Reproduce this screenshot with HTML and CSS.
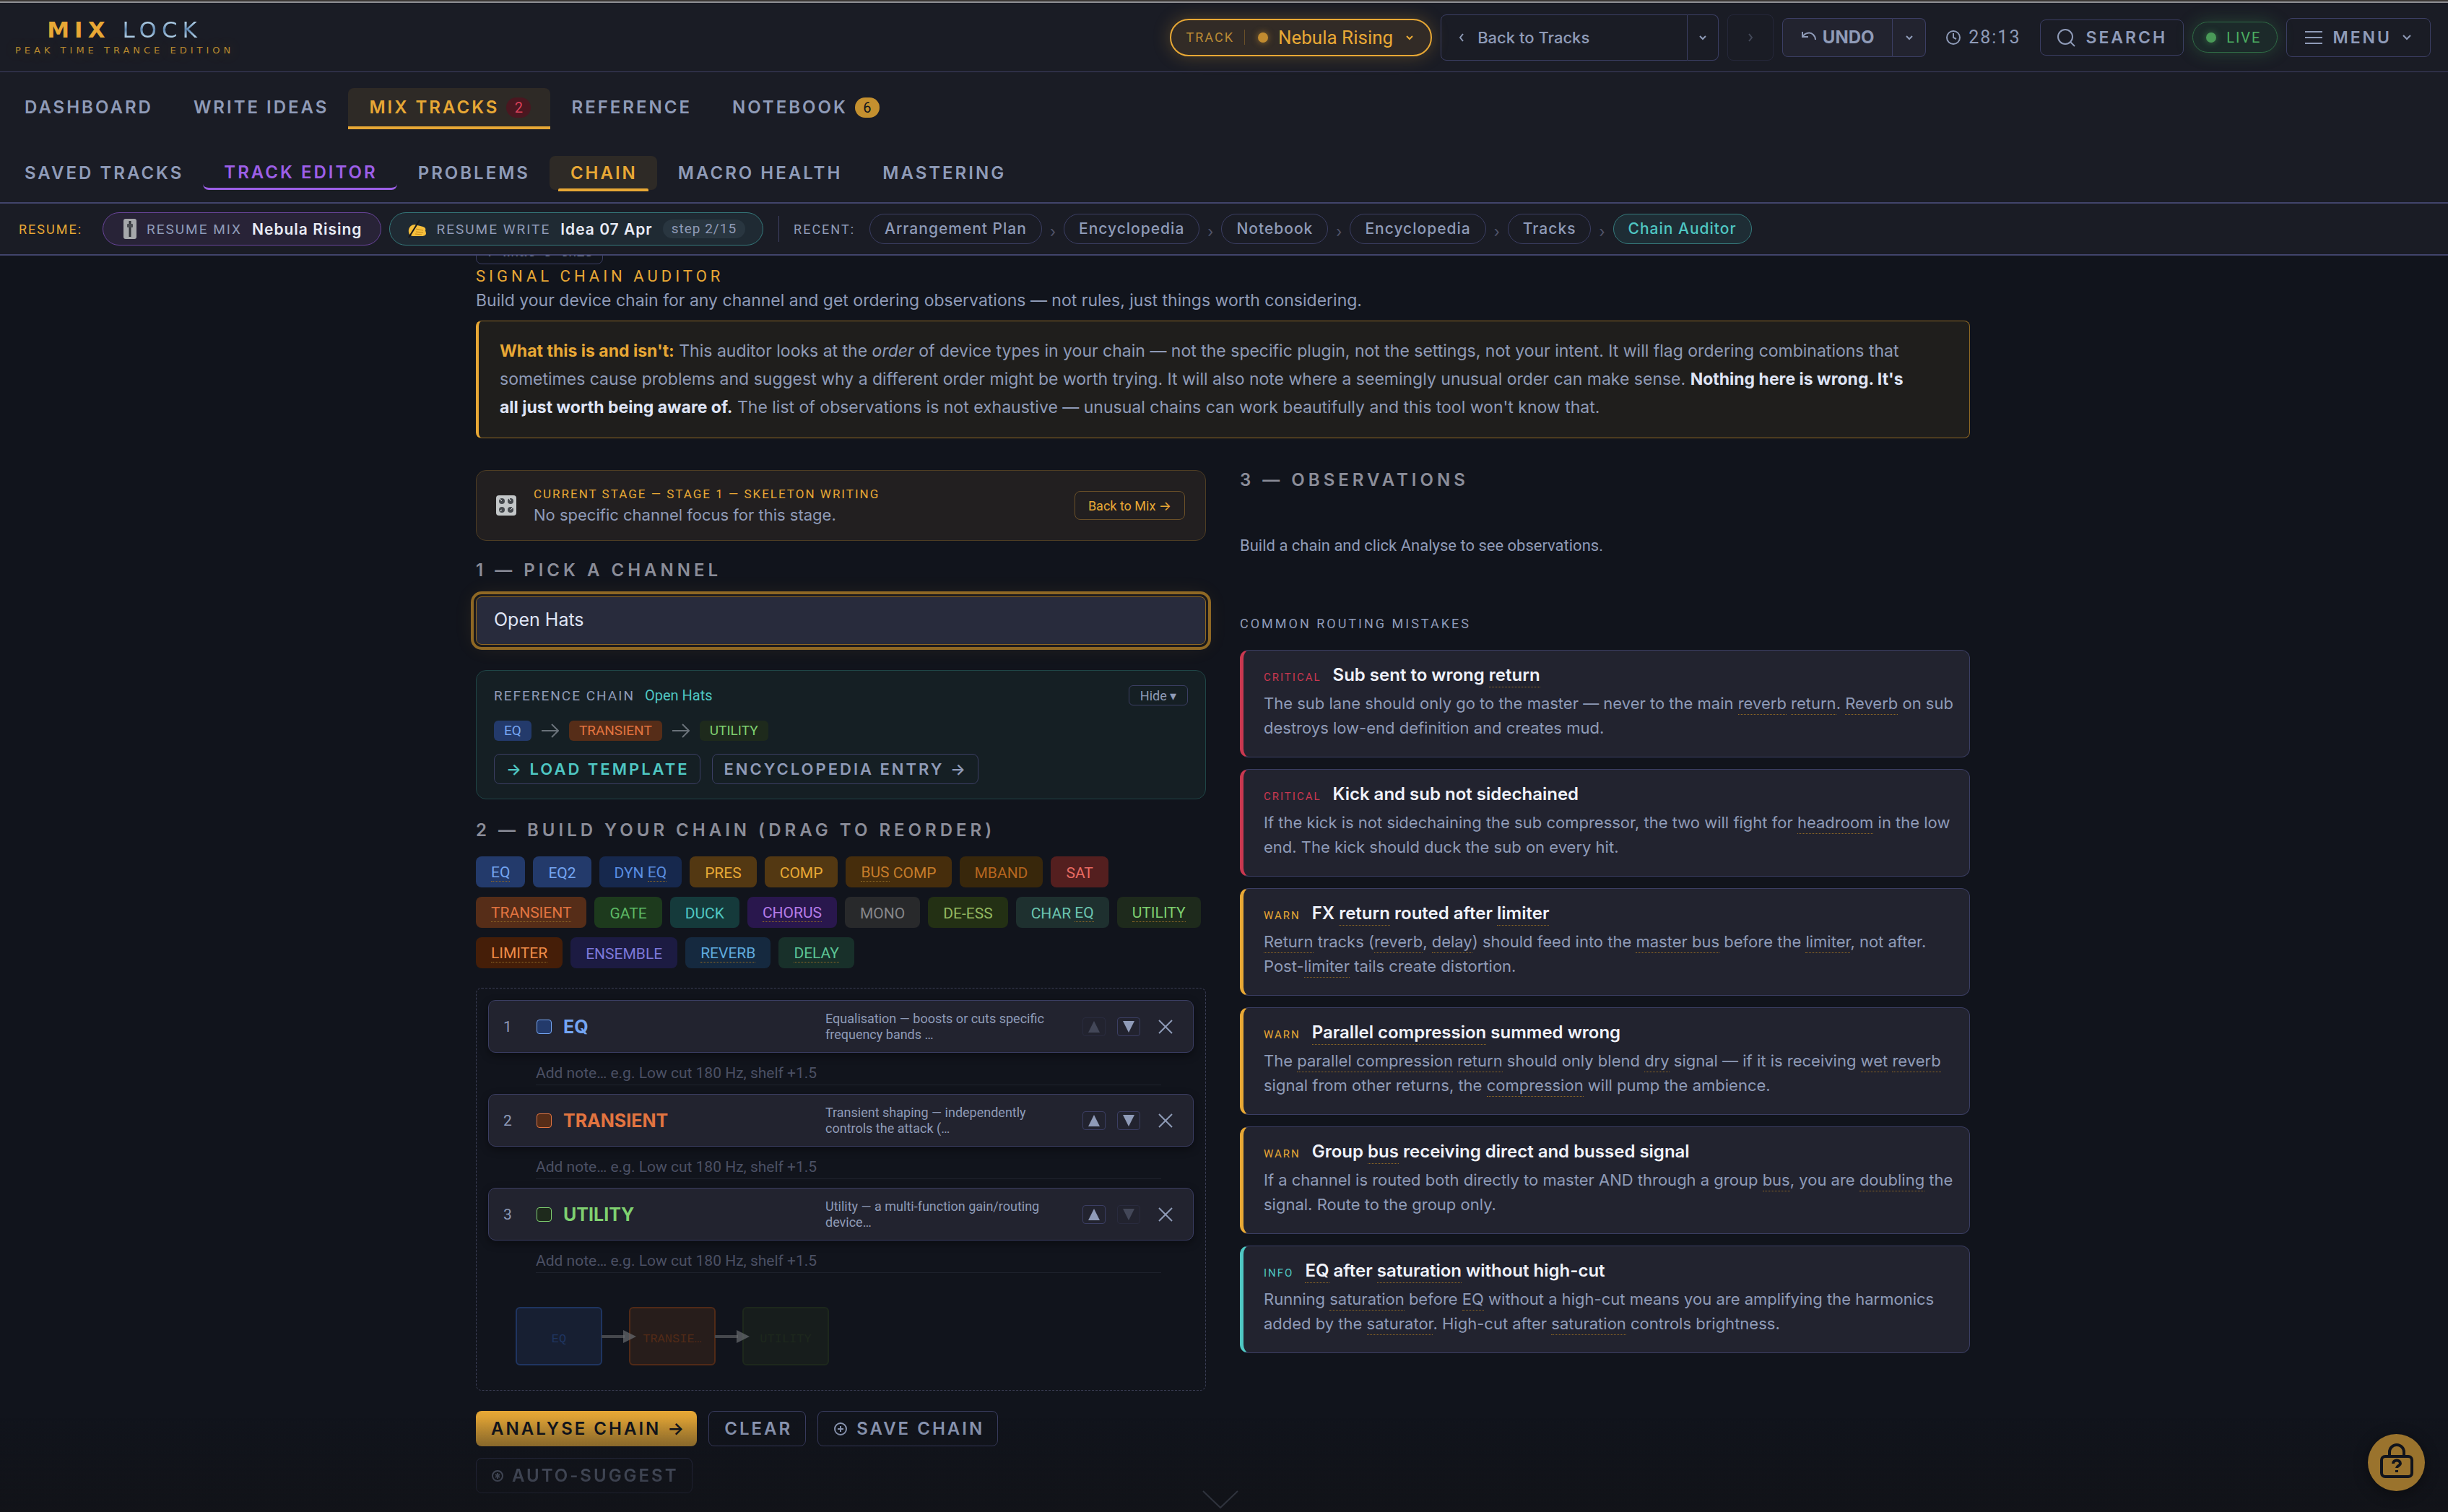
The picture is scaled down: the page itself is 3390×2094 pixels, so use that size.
FILE: index.html
```html
<!DOCTYPE html>
<html lang="en">
<head>
    <meta charset="UTF-8">
    <title>Mix Lock - Chain Auditor</title>
    <link rel="stylesheet" href="styles.css">
</head>
<body>
    <header class="header">
        <div class="topbar">
            <a class="logo" href="#">
                <span class="logo-name"><span class="logo-mix">MIX</span> <span class="logo-lock">LOCK</span></span>
                <span class="logo-sub">PEAK TIME TRANCE EDITION</span>
            </a>
            <div class="tools">
                <button class="track-pill"><span class="track-label">TRACK</span><span class="dot"></span><span class="track-name">Nebula Rising</span>
                    <svg width="10" height="8" viewBox="0 0 10 8"><path d="M1 2l4 4 4-4"/></svg></button>
                <div class="split back">
                    <button class="split-main"><svg width="8" height="12" viewBox="0 0 8 12"><path d="M6 1L2 6l4 5"/></svg>Back to Tracks</button>
                    <button class="split-drop" aria-label="History"><svg width="10" height="8" viewBox="0 0 10 8"><path d="M1 2l4 4 4-4"/></svg></button>
                </div>
                <button class="forward" disabled aria-label="Forward"><svg width="8" height="12" viewBox="0 0 8 12"><path d="M2 1l4 5-4 5"/></svg></button>
                <div class="split undo">
                    <button class="split-main"><svg width="22" height="18" viewBox="0 0 22 18"><path d="M2 1v7h8M2 8C6 2 13 1 17 5c2 2 3 4 3 7"/></svg>UNDO</button>
                    <button class="split-drop" aria-label="Undo history"><svg width="10" height="8" viewBox="0 0 10 8"><path d="M1 2l4 4 4-4"/></svg></button>
                </div>
                <div class="clock"><svg width="22" height="22" viewBox="0 0 22 22"><circle cx="11" cy="11" r="9"/><path d="M11 5v6l4 2"/></svg>28:13</div>
                <button class="tool search"><svg width="26" height="26" viewBox="0 0 26 26"><circle cx="12" cy="12" r="10"/><path d="M19 19l6 6"/></svg>SEARCH</button>
                <div class="live"><span class="live-dot"></span>LIVE</div>
                <button class="tool menu"><svg width="24" height="20" viewBox="0 0 24 20"><path d="M0 2h24M0 10h24M0 18h24"/></svg>MENU
                    <svg width="14" height="10" viewBox="0 0 14 10"><path d="M2 2l5 5 5-5"/></svg></button>
            </div>
        </div>
        <nav class="nav nav-main">
            <a href="#">DASHBOARD</a>
            <a href="#">WRITE IDEAS</a>
            <a href="#" class="active">MIX TRACKS<span class="count red">2</span></a>
            <a href="#">REFERENCE</a>
            <a href="#">NOTEBOOK<span class="count gold">6</span></a>
        </nav>
        <nav class="nav nav-sub">
            <a href="#">SAVED TRACKS</a>
            <a href="#" class="editor">TRACK EDITOR</a>
            <a href="#">PROBLEMS</a>
            <a href="#" class="active">CHAIN</a>
            <a href="#">MACRO HEALTH</a>
            <a href="#">MASTERING</a>
        </nav>
        <div class="resume">
            <span class="resume-title">RESUME:</span>
            <button class="pill pill-mix">
                <svg width="18" height="28" viewBox="0 0 18 28"><rect width="18" height="28" rx="3" fill="#a6a8ab"/><path d="M9 3v22" stroke="#303238" stroke-width="3"/><rect x="5" y="7" width="8" height="5" rx="1" fill="#4a4c52"/></svg>
                <span class="pill-label">RESUME MIX</span><b>Nebula Rising</b>
            </button>
            <button class="pill pill-write">
                <svg width="26" height="26" viewBox="0 0 26 26"><path d="M2 14c1-4 4-7 8-7l4 1 8 2c3 1 4 3 3 5l1 4c0 3-3 4-6 4H8c-4 0-7-4-6-9z" fill="#f6bf3b"/><path d="M12 13l10 2M12 17l10 1M11 20l9 1" stroke="#c58a1d" stroke-width="1"/><path d="M2 25L17 1" stroke="#17181c" stroke-width="2"/></svg>
                <span class="pill-label">RESUME WRITE</span><b>Idea 07 Apr</b><span class="step">step 2/15</span>
            </button>
            <span class="divider"></span>
            <span class="recent-title">RECENT:</span>
            <div class="crumbs">
                <a href="#">Arrangement Plan</a><i>›</i>
                <a href="#">Encyclopedia</a><i>›</i>
                <a href="#">Notebook</a><i>›</i>
                <a href="#">Encyclopedia</a><i>›</i>
                <a href="#">Tracks</a><i>›</i>
                <a href="#" class="current">Chain Auditor</a>
            </div>
        </div>
    </header>

    <main class="page">
        <button class="whats-this">? What's this</button>
        <h1>SIGNAL CHAIN AUDITOR</h1>
        <p class="intro">Build your device chain for any channel and get ordering observations — not rules, just things worth considering.</p>
        <div class="callout">
            <strong class="gold-text">What this is and isn't:</strong> This auditor looks at the <em>order</em> of device types in your chain — not the specific plugin, not the settings, not your intent. It will flag ordering combinations that sometimes cause problems and suggest why a different order might be worth trying. It will also note where a seemingly unusual order can make sense. <strong>Nothing here is wrong. It's all just worth being aware of.</strong> The list of observations is not exhaustive — unusual chains can work beautifully and this tool won't know that.
        </div>

        <div class="columns">
            <section class="left">
                <div class="stage">
                    <svg width="28" height="28" viewBox="0 0 28 28"><rect width="28" height="28" rx="4" fill="#c3c6c8"/><g fill="#45484d"><circle cx="8" cy="8" r="4"/><circle cx="20" cy="8" r="4"/><circle cx="8" cy="20" r="4"/><circle cx="20" cy="20" r="4"/></g><path d="M8 8L5 5M20 8l-2-4M8 20l-3 2M20 20l3-3" stroke="#e8eaec" stroke-width="1"/></svg>
                    <div class="stage-text">
                        <div class="stage-name">CURRENT STAGE — STAGE 1 — SKELETON WRITING</div>
                        <div class="stage-note">No specific channel focus for this stage.</div>
                    </div>
                    <button class="back-to-mix">Back to Mix →</button>
                </div>

                <h2><label for="channel">1 — PICK A CHANNEL</label></h2>
                <select id="channel" class="channel">
                    <option>Open Hats</option>
                </select>

                <div class="refchain">
                    <div class="refchain-head">
                        <span class="ref-label">REFERENCE CHAIN</span><span class="ref-name">Open Hats</span>
                        <button class="hide">Hide ▾</button>
                    </div>
                    <div class="refchain-flow">
                        <span class="eq">EQ</span><svg width="24" height="20" viewBox="0 0 24 20"><path d="M0 10h23M14 1l9 9-9 9"/></svg>
                        <span class="transient">TRANSIENT</span><svg width="24" height="20" viewBox="0 0 24 20"><path d="M0 10h23M14 1l9 9-9 9"/></svg>
                        <span class="utility">UTILITY</span>
                    </div>
                    <div class="refchain-actions">
                        <button class="btn teal">→ LOAD TEMPLATE</button>
                        <button class="btn">ENCYCLOPEDIA ENTRY →</button>
                    </div>
                </div>

                <h2>2 — BUILD YOUR CHAIN (DRAG TO REORDER)</h2>
                <div class="palette">
                    <button class="eq"><u>EQ</u></button>
                    <button class="eq">EQ2</button>
                    <button class="dyneq">DYN <u>EQ</u></button>
                    <button class="comp">PRES</button>
                    <button class="comp">COMP</button>
                    <button class="buscomp"><u>BUS</u> COMP</button>
                    <button class="mband">MBAND</button>
                    <button class="sat">SAT</button>
                    <button class="transient"><u>TRANSIENT</u></button>
                    <button class="gate">GATE</button>
                    <button class="duck">DUCK</button>
                    <button class="chorus"><u>CHORUS</u></button>
                    <button class="mono">MONO</button>
                    <button class="deess">DE-ESS</button>
                    <button class="chareq">CHAR <u>EQ</u></button>
                    <button class="utility"><u>UTILITY</u></button>
                    <button class="limiter"><u>LIMITER</u></button>
                    <button class="ensemble">ENSEMBLE</button>
                    <button class="reverb"><u>REVERB</u></button>
                    <button class="delay"><u>DELAY</u></button>
                </div>

                <div class="chain">
                    <div class="device">
                        <span class="num">1</span><span class="swatch eq"></span><span class="name eq">EQ</span>
                        <span class="desc">Equalisation — boosts or cuts specific frequency bands …</span>
                        <button class="move" disabled aria-label="Move up"><svg width="16" height="16" viewBox="0 0 16 16"><path d="M8 0l8 16H0z"/></svg></button>
                        <button class="move" aria-label="Move down"><svg width="16" height="16" viewBox="0 0 16 16"><path d="M8 16l8-16H0z"/></svg></button>
                        <button class="remove" aria-label="Remove"><svg width="20" height="20" viewBox="0 0 20 20"><path d="M1 1l18 18M19 1L1 19"/></svg></button>
                    </div>
                    <input class="note" type="text" aria-label="Note for EQ" placeholder="Add note… e.g. Low cut 180 Hz, shelf +1.5">
                    <div class="device">
                        <span class="num">2</span><span class="swatch transient"></span><span class="name transient">TRANSIENT</span>
                        <span class="desc">Transient shaping — independently controls the attack (…</span>
                        <button class="move" aria-label="Move up"><svg width="16" height="16" viewBox="0 0 16 16"><path d="M8 0l8 16H0z"/></svg></button>
                        <button class="move" aria-label="Move down"><svg width="16" height="16" viewBox="0 0 16 16"><path d="M8 16l8-16H0z"/></svg></button>
                        <button class="remove" aria-label="Remove"><svg width="20" height="20" viewBox="0 0 20 20"><path d="M1 1l18 18M19 1L1 19"/></svg></button>
                    </div>
                    <input class="note" type="text" aria-label="Note for Transient" placeholder="Add note… e.g. Low cut 180 Hz, shelf +1.5">
                    <div class="device">
                        <span class="num">3</span><span class="swatch utility"></span><span class="name utility">UTILITY</span>
                        <span class="desc">Utility — a multi-function gain/routing device…</span>
                        <button class="move" aria-label="Move up"><svg width="16" height="16" viewBox="0 0 16 16"><path d="M8 0l8 16H0z"/></svg></button>
                        <button class="move" disabled aria-label="Move down"><svg width="16" height="16" viewBox="0 0 16 16"><path d="M8 16l8-16H0z"/></svg></button>
                        <button class="remove" aria-label="Remove"><svg width="20" height="20" viewBox="0 0 20 20"><path d="M1 1l18 18M19 1L1 19"/></svg></button>
                    </div>
                    <input class="note" type="text" aria-label="Note for Utility" placeholder="Add note… e.g. Low cut 180 Hz, shelf +1.5">
                    <svg class="flow" width="440" height="84" viewBox="0 0 440 84">
                        <rect x="2" y="2" width="118" height="79" rx="5" fill="#171f32" stroke="#1f3561"/>
                        <rect x="159" y="2" width="118" height="79" rx="5" fill="#271d1b" stroke="#512a17"/>
                        <rect x="316" y="2" width="118" height="79" rx="5" fill="#171d1c" stroke="#1d281c"/>
                        <path d="M120 42h32M277 42h32" stroke="#45474c" stroke-width="4"/>
                        <path d="M150 33l18 9-18 9zM307 33l18 9-18 9z" fill="#6a6c70" opacity=".7"/>
                        <g class="flow-text">
                            <text x="61" y="50" fill="#1f3561">EQ</text>
                            <text x="218" y="50" fill="#512a17">TRANSIE…</text>
                            <text x="375" y="50" fill="#1d281c">UTILITY</text>
                        </g>
                    </svg>
                </div>

                <div class="actions">
                    <button class="btn primary">ANALYSE CHAIN →</button>
                    <button class="btn">CLEAR</button>
                    <button class="btn"><svg width="20" height="20" viewBox="0 0 20 20"><circle cx="10" cy="10" r="8"/><path d="M10 6v8M6 10h8"/></svg>SAVE CHAIN</button>
                    <button class="btn" disabled><svg width="16" height="16" viewBox="0 0 16 16"><circle cx="8" cy="8" r="7"/><path d="M8 4v8M5 6l6 4M11 6l-6 4"/></svg>AUTO-SUGGEST</button>
                </div>
            </section>

            <section class="right">
                <h2>3 — OBSERVATIONS</h2>
                <p class="empty">Build a chain and click Analyse to see observations.</p>
                <h3>COMMON ROUTING MISTAKES</h3>
                <article class="mistake critical">
                    <h4><span class="level">CRITICAL</span>Sub sent to wrong <u>return</u></h4>
                    <p>The sub lane should only go to the master — never to the main <u>reverb</u> <u>return</u>. <u>Reverb</u> on sub destroys low-end definition and creates mud.</p>
                </article>
                <article class="mistake critical">
                    <h4><span class="level">CRITICAL</span>Kick and sub not sidechained</h4>
                    <p>If the kick is not sidechaining the sub compressor, the two will fight for <u>headroom</u> in the low end. The kick should duck the sub on every hit.</p>
                </article>
                <article class="mistake warn">
                    <h4><span class="level">WARN</span>FX <u>return</u> routed after <u>limiter</u></h4>
                    <p><u>Return</u> tracks (<u>reverb</u>, <u>delay</u>) should feed into the <u>master bus</u> before the <u>limiter</u>, not after. Post-<u>limiter</u> tails create distortion.</p>
                </article>
                <article class="mistake warn">
                    <h4><span class="level">WARN</span><u>Parallel compression</u> summed wrong</h4>
                    <p>The <u>parallel compression</u> <u>return</u> should only blend <u>dry</u> signal — if it is receiving <u>wet</u> <u>reverb</u> signal from other returns, the <u>compression</u> will pump the ambience.</p>
                </article>
                <article class="mistake warn">
                    <h4><span class="level">WARN</span>Group <u>bus</u> receiving direct and bussed signal</h4>
                    <p>If a channel is routed both directly to master AND through a group <u>bus</u>, you are <u>doubling</u> the signal. Route to the group only.</p>
                </article>
                <article class="mistake info">
                    <h4><span class="level">INFO</span><u>EQ</u> after <u>saturation</u> without high-cut</h4>
                    <p>Running <u>saturation</u> before <u>EQ</u> without a high-cut means you are amplifying the harmonics added by the <u>saturator</u>. High-cut after <u>saturation</u> controls brightness.</p>
                </article>
            </section>
        </div>
    </main>

    <div class="fade"><svg width="50" height="26" viewBox="0 0 50 26"><path d="M1 1l24 23L49 1"/></svg></div>
    <button class="help" aria-label="Help">
        <svg width="46" height="50" viewBox="0 0 46 50"><rect x="2" y="19" width="42" height="28" rx="5"/><path d="M13 19v-6a10 10 0 0 1 20 0v6"/><path d="M18 29c0-6 10-6 10 0 0 3-5 3-5 6M23 38v3"/></svg>
    </button>
</body>
</html>
```
FILE: styles.css
```css
* {
    box-sizing: border-box;
}
body {
    margin: 0;
    background-color: #11141c;
    color: #8f9bb8;
    font-family: Inter, "Liberation Sans", sans-serif;
    font-size: 22px;
}
button, input, select {
    font: inherit;
    color: inherit;
    margin: 0;
    padding: 0;
    background: none;
    border: 1px solid #3b3e63;
    border-radius: 8px;
}
button {
    display: flex;
    align-items: center;
    justify-content: center;
    white-space: nowrap;
    cursor: pointer;
}
a {
    color: inherit;
    text-decoration: none;
}
h1, h2, h3, h4, p {
    margin: 0;
}
svg {
    fill: none;
    stroke: currentColor;
    stroke-width: 2;
    flex: none;
}
svg [fill]:not([stroke]) {
    stroke: none;
}

/* header */
.header {
    position: relative;
    z-index: 2;
    background-color: #1a1c25;
    border-top: 2px solid #3c3835;
    box-shadow: inset 0 2px #8f8f94;
}
.topbar {
    display: flex;
    justify-content: space-between;
    align-items: center;
    height: 98px;
    padding: 2px 24px 0 21px;
    border-bottom: 1px solid #3f4063;
}
.logo {
    display: flex;
    flex-direction: column;
    align-items: center;
    gap: 6px;
    padding-bottom: 2px;
    font-family: "DejaVu Sans", sans-serif;
}
.logo-name {
    font-size: 31px;
    line-height: 32px;
    letter-spacing: 7px;
}
.logo-mix {
    font-weight: bold;
    color: #e8a835;
}
.logo-lock {
    background: linear-gradient(#b5d3ea 20%, #5f87b0 50%, #b5d3ea 80%);
    -webkit-background-clip: text;
    background-clip: text;
    color: transparent;
}
.logo-sub {
    font-size: 13px;
    line-height: 14px;
    letter-spacing: 5px;
    color: #b98a30;
    text-shadow: 0 0 20px #e8a83555;
}
.tools {
    display: flex;
    align-items: center;
    gap: 12px;
}
.track-pill {
    height: 52px;
    padding: 0 24px 0 20px;
    font-family: Roboto, sans-serif;
    color: #e8a835;
    background-color: #322b26;
    border: 2px solid #e8a835;
    border-radius: 26px;
    box-shadow: 0 0 24px #e8a83544;
}
.track-label {
    font-size: 18px;
    letter-spacing: 2px;
    padding-right: 14px;
    border-right: 1px solid #6b5028;
    color: #b98a35;
}
.dot, .live-dot {
    width: 14px;
    height: 14px;
    border-radius: 50%;
    background-color: #c18b30;
    box-shadow: 0 0 10px #e8a83588;
    margin: 0 14px 0 18px;
}
.track-name {
    font-size: 26px;
    margin-right: 18px;
}
.split {
    display: flex;
}
.split-main {
    border-radius: 8px 0 0 8px;
}
.split-drop {
    width: 43px;
    border-left: none;
    border-radius: 0 8px 8px 0;
}
.back {
    height: 64px;
    font-weight: 500;
    letter-spacing: 1px;
}
.back .split-main {
    width: 342px;
    justify-content: flex-start;
    padding-left: 24px;
    gap: 18px;
}
.forward {
    width: 64px;
    height: 64px;
    opacity: .35;
}
.undo {
    height: 54px;
    background-color: #22232f;
    border-radius: 8px;
    font-size: 24px;
    font-weight: 700;
    letter-spacing: 2px;
}
.undo .split-main {
    width: 153px;
    gap: 8px;
}
.undo .split-drop {
    width: 46px;
}
.clock {
    display: flex;
    align-items: center;
    gap: 10px;
    padding: 0 15px;
    font-family: Roboto, sans-serif;
    font-size: 25px;
    letter-spacing: 2px;
}
.tool {
    font-size: 23px;
    font-weight: 600;
    letter-spacing: 3px;
    gap: 14px;
    padding: 0 22px;
}
.search {
    height: 50px;
}
.menu {
    height: 54px;
    padding: 0 25px;
}
.live {
    display: flex;
    align-items: center;
    height: 43px;
    padding: 0 22px 0 0;
    font-family: Roboto, sans-serif;
    font-size: 20px;
    letter-spacing: 2px;
    color: #4caf62;
    background-color: #1c2a2a;
    border: 1px solid #2f6b45;
    border-radius: 22px;
    box-shadow: 0 0 24px #4caf6244;
}
.live-dot {
    background-color: #4a9a58;
    box-shadow: 0 0 10px #4caf6288;
}
.nav {
    display: flex;
    padding-left: 5px;
    font-size: 24px;
    font-weight: 600;
    letter-spacing: 3px;
}
.nav-main {
    padding-top: 22px;
}
.nav a {
    display: flex;
    align-items: center;
    padding: 0 27px 0 29px;
    border-radius: 8px 8px 0 0;
}
.nav-main a {
    height: 57px;
    border-bottom: 4px solid transparent;
}
.nav .active {
    color: #e8a835;
    background-color: #2e2a26;
}
.nav-main .active {
    border-bottom-color: #e8a835;
}
.count {
    width: 34px;
    height: 28px;
    margin-left: 10px;
    border-radius: 14px;
    font: 20px/28px Roboto, sans-serif;
    letter-spacing: 0;
    text-align: center;
}
.count.red {
    background-color: #4a1720;
    color: #d9405a;
}
.count.gold {
    background-color: #c4902f;
    color: #11141c;
}
.nav-sub {
    padding-top: 37px;
    padding-bottom: 17px;
    border-bottom: 2px solid #41446b;
}
.nav-sub a {
    position: relative;
    height: 47px;
}
.nav-sub .active {
    border-radius: 8px;
}
.nav-sub .active::after {
    content: "";
    position: absolute;
    left: 12px;
    right: 12px;
    bottom: -2px;
    height: 4px;
    background-color: #e8a835;
    border-radius: 2px 2px 0 0;
}
.nav-sub .editor {
    color: #9d5fe8;
    border-bottom: 3px solid #9d5fe8;
    border-radius: 0 0 8px 8px;
}
.resume {
    display: flex;
    align-items: center;
    height: 72px;
    padding-left: 26px;
    border-bottom: 2px solid #41446b;
}
.resume-title, .recent-title {
    font-family: Roboto, sans-serif;
    font-size: 18px;
    letter-spacing: 2px;
}
.resume-title {
    color: #e8a835;
    margin-right: 28px;
}
.pill {
    height: 46px;
    margin-right: 11px;
    padding: 0 26px 0 28px;
    gap: 14px;
    border-radius: 23px;
}
.pill b {
    font-size: 21px;
    font-weight: 600;
    letter-spacing: 1px;
    color: #e8ebf5;
}
.pill-mix {
    background-color: #282337;
    border-color: #6a459c;
}
.pill-write {
    padding: 0 24px;
    background-color: #1f2a33;
    border-color: #357a7c;
}
.pill-label {
    font-family: Roboto, sans-serif;
    font-size: 19px;
    letter-spacing: 2px;
}
.step {
    padding: 0 12px;
    border-radius: 13px;
    background-color: #293640;
    font: 19px/26px Roboto, sans-serif;
    letter-spacing: 1px;
}
.divider {
    width: 1px;
    height: 36px;
    margin: 0 20px 0 10px;
    background-color: #3f4063;
}
.recent-title {
    margin-right: 20px;
}
.crumbs {
    display: flex;
    align-items: center;
    gap: 11px;
    font-size: 21px;
    font-weight: 500;
    letter-spacing: 1px;
}
.crumbs a {
    padding: 0 20px;
    line-height: 40px;
    border: 1px solid #3b3e63;
    border-radius: 21px;
}
.crumbs i {
    font-style: normal;
    font-weight: 400;
    letter-spacing: 0;
    color: #51546a;
    padding-top: 8px;
    line-height: 20px;
}
.crumbs .current {
    color: #4fc7c3;
    background-color: #1e2d35;
    border-color: #357a7c;
}

/* page */
.page {
    max-width: 2072px;
    margin: 0 auto;
    padding-right: 3px;
}
.whats-this {
    height: 40px;
    width: 176px;
    margin-top: -28px;
    padding-top: 8px;
    font-family: "Liberation Mono", monospace;
    font-size: 19px;
}
h1 {
    margin-top: 4px;
    font: 400 22px/26px Roboto, sans-serif;
    letter-spacing: 5px;
    color: #e8a835;
}
.intro {
    font-size: 23px;
    line-height: 40px;
}
.callout {
    margin-top: 8px;
    padding: 22px 75px 22px 29px;
    font-size: 23px;
    line-height: 39px;
    background-color: #1f1e1c;
    border: 1px solid #8f6824;
    border-left: 4px solid #e8a835;
    border-radius: 8px;
}
.callout strong {
    font-weight: 700;
    color: #dfe4f5;
}
.callout .gold-text {
    color: #e8a835;
}
.columns {
    display: grid;
    grid-template-columns: 1fr 1fr;
    gap: 47px;
    margin-top: 44px;
    align-items: start;
}
h2 {
    font-size: 24px;
    line-height: 28px;
    font-weight: 600;
    letter-spacing: 5px;
    color: #8b8d99;
}
.stage {
    display: flex;
    align-items: center;
    height: 98px;
    padding: 0 28px 0 27px;
    background-color: #221f20;
    border: 1px solid #4e3d23;
    border-radius: 14px;
}
.stage-text {
    flex: 1;
    margin-left: 24px;
}
.stage-name {
    font: 17px/26px Roboto, sans-serif;
    letter-spacing: 2px;
    color: #e8a835;
}
.stage-note {
    font-size: 22px;
    line-height: 32px;
}
.back-to-mix {
    height: 40px;
    padding: 0 18px;
    font-family: Roboto, Inter, sans-serif;
    font-size: 18px;
    color: #e8a835;
    border-color: #6b5028;
}
.left h2 {
    margin: 27px 0 22px;
}
.channel {
    appearance: none;
    display: block;
    width: 100%;
    height: 67px;
    padding: 0 24px 3px;
    font-size: 25px;
    color: #dfe4f5;
    background-color: #282b3c;
    border: 1px solid #8f6824;
    outline: 4px solid #8f6824;
    outline-offset: 3px;
    box-shadow: 0 0 30px #e8a83522;
}
.refchain {
    height: 179px;
    margin: 35px 0 29px;
    padding: 20px 24px;
    background-color: #151f24;
    border: 1px solid #1f4546;
    border-radius: 14px;
}
.refchain-head, .refchain-flow, .refchain-actions {
    display: flex;
    align-items: center;
    font-family: Roboto, sans-serif;
}
.ref-label {
    font-size: 19px;
    letter-spacing: 2px;
}
.ref-name {
    margin-left: 14px;
    color: #4fc7c3;
    font-size: 20px;
}
.hide {
    height: 28px;
    width: 82px;
    margin-left: auto;
    font-size: 18px;
    border-radius: 6px;
}
.refchain-flow {
    gap: 14px;
    margin: 21px 0 18px;
    color: #6a727a;
}
.refchain-flow span {
    padding: 0 14px;
    font-size: 19px;
    line-height: 28px;
    border-radius: 6px;
}
.refchain-actions, .actions {
    display: flex;
    flex-wrap: wrap;
    gap: 16px;
}
.btn {
    height: 42px;
    padding: 0 14px 0 16px;
    font: 600 22px Inter, sans-serif;
    letter-spacing: 3px;
    color: #8f9bb8;
}
.btn.teal {
    color: #4fc7c3;
}
.palette {
    display: flex;
    flex-wrap: wrap;
    gap: 13px 11px;
}
.palette button {
    height: 43px;
    padding: 2px 21px 0;
    border: none;
    font-family: Roboto, sans-serif;
    font-size: 21px;
    white-space: pre;
}
u {
    text-decoration: none;
    border-bottom: 1px dotted #8f6824;
    padding-bottom: 2px;
}
.palette u {
    padding-bottom: 0;
}
.eq { color: #74a5f2; background-color: #233a6b; }
.dyneq { color: #5a8de0; background-color: #16284d; }
.comp { color: #e8a835; background-color: #533812; }
.buscomp { color: #c67c2a; background-color: #462d0c; }
.mband { color: #b5651f; background-color: #38270b; }
.sat { color: #e86a62; background-color: #541f1f; }
.transient { color: #e27440; background-color: #562d18; }
.gate { color: #5cb865; background-color: #1d3a1d; }
.duck { color: #4fc7c3; background-color: #153a3b; }
.chorus { color: #b57be8; background-color: #29174d; }
.mono { color: #85868a; background-color: #28292b; }
.deess { color: #93b860; background-color: #233014; }
.chareq { color: #6cc5b0; background-color: #1e302f; }
.utility { color: #7fd070; background-color: #1e2a1c; }
.limiter { color: #f08c48; background-color: #451e08; }
.ensemble { color: #7d78d8; background-color: #1c1b42; }
.reverb { color: #5faade; background-color: #15293f; }
.delay { color: #5cc596; background-color: #18302a; }

/* device chain */
.chain {
    margin-top: 27px;
    padding: 16px;
    border: 1px dashed #3b3e55;
    border-radius: 8px;
}
.device {
    display: flex;
    align-items: center;
    height: 73px;
    padding: 0 28px 0 20px;
    background-color: #22232f;
    border: 1px solid #3b3e63;
    border-radius: 10px;
    box-shadow: 0 4px 12px #00000066;
    font-family: Roboto, sans-serif;
}
.num {
    width: 46px;
    font-size: 21px;
}
.swatch {
    width: 21px;
    height: 20px;
    border: 1px solid currentColor;
    border-radius: 4px;
    margin-right: 16px;
}
.name {
    flex: 1;
    font: 700 25px Inter, sans-serif;
    background: none;
}
.desc {
    width: 320px;
    margin-right: 36px;
    font-size: 18px;
    line-height: 22px;
}
.move {
    width: 32px;
    height: 26px;
    margin-right: 16px;
    border-radius: 4px;
}
.move svg {
    fill: currentColor;
    stroke: none;
}
.move:disabled {
    opacity: .3;
}
.remove {
    border: none;
    margin-left: 9px;
}
.note {
    display: block;
    width: calc(100% - 111px);
    height: 34px;
    margin: 11px 0 12px 66px;
    border: none;
    border-bottom: 1px solid #1e222c;
    border-radius: 0;
    font-family: Roboto, sans-serif;
    font-size: 21px;
}
.note::placeholder {
    color: #4b5064;
    opacity: 1;
}
.flow {
    display: block;
    margin: 46px 0 16px 37px;
}
.flow-text {
    font: 17px "Liberation Mono", monospace;
    text-anchor: middle;
}
.actions {
    margin-top: 28px;
}
.actions .btn {
    height: 49px;
    padding: 0 18px 0 21px;
    gap: 12px;
    font-size: 24px;
}
.actions .primary {
    padding-right: 15px;
    color: #11141c;
    background: linear-gradient(#e8a835, #a67d30);
    border: none;
}
.actions .btn:disabled {
    opacity: .6;
}

/* observations */
.empty {
    margin: 63px 0 82px;
    font: 22px/28px Roboto, sans-serif;
}
h3 {
    margin-bottom: 24px;
    font: 400 18px/24px Roboto, sans-serif;
    letter-spacing: 3px;
}
.mistake {
    height: 149px;
    margin-bottom: 16px;
    padding: 16px 16px 16px 28px;
    background-color: #22232f;
    border: 1px solid #3b3e63;
    border-left: 5px solid #e8a835;
    border-radius: 12px;
}
.mistake h4 {
    font-size: 24px;
    line-height: 36px;
    font-weight: 600;
    color: #f0f2fa;
}
.level {
    margin-right: 16px;
    font: 15px Roboto, sans-serif;
    letter-spacing: 2px;
    color: #e8a835;
}
.mistake p {
    margin-top: 4px;
    font-size: 22px;
    line-height: 34px;
}
.critical {
    border-left-color: #c93850;
}
.critical .level {
    color: #c93850;
}
.info {
    border-left-color: #4fc7c3;
}
.info .level {
    color: #4fc7c3;
}

.fade {
    position: fixed;
    left: 0;
    right: 0;
    bottom: 0;
    z-index: 3;
    height: 130px;
    display: flex;
    justify-content: center;
    align-items: flex-end;
    padding: 0 10px 4px 0;
    color: #2f333d;
    background: linear-gradient(#12131700, #121317aa);
    pointer-events: none;
}
.help {
    position: fixed;
    right: 32px;
    bottom: 29px;
    z-index: 4;
    width: 79px;
    height: 79px;
    padding-bottom: 6px;
    border: none;
    border-radius: 50%;
    color: #11141c;
    background-color: #9a732d;
    box-shadow: 0 4px 20px #00000066;
}
.help svg {
    stroke-width: 4;
}
```
